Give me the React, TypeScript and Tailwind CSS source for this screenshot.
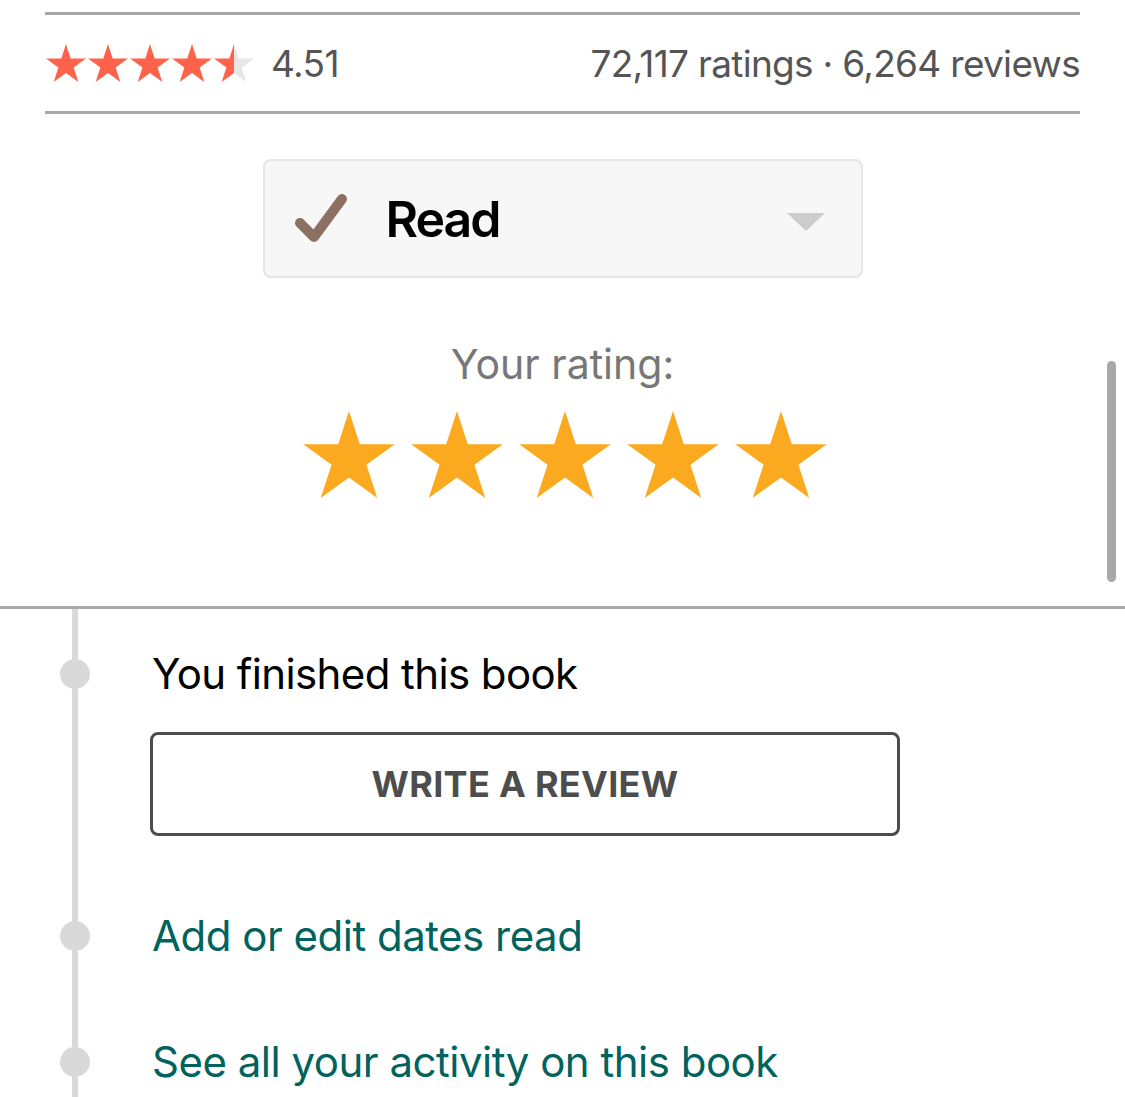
import React from "react";

const STAR_POINTS =
  "50,0 61.23,34.55 97.55,34.55 68.16,55.9 79.39,90.45 50,69.1 20.61,90.45 31.84,55.9 2.45,34.55 38.77,34.55";

function Star({ className, fill }: { className: string; fill: string }) {
  return (
    <svg viewBox="2.45 0 95.1 90.45" className={className}>
      <polygon points={STAR_POINTS} fill={fill} />
    </svg>
  );
}

function PartialStar({ className, pct }: { className: string; pct: number }) {
  return (
    <svg viewBox="2.45 0 95.1 90.45" className={className}>
      <defs>
        <linearGradient id="partial" x1="0" x2="1" y1="0" y2="0">
          <stop offset={`${pct}%`} stopColor="#ff624a" />
          <stop offset={`${pct}%`} stopColor="#e6e6e6" />
        </linearGradient>
      </defs>
      <polygon points={STAR_POINTS} fill="url(#partial)" />
    </svg>
  );
}

// grey node sitting on the timeline rail
function Dot() {
  return <div className="absolute -left-[92px] top-[15px] w-[30px] h-[30px] rounded-full bg-[#d9d9d9]" />;
}

export default function App() {
  const font = { fontFamily: "Inter, 'Noto Sans', sans-serif" };

  return (
    <div className="relative w-[1125px] h-[1097px] bg-white overflow-hidden" style={font}>
      {/* book rating summary */}
      <div className="px-[45px] pt-[12px]">
        <div className="flex items-center justify-between h-[102px] border-y-[3px] border-[#a8a8a8]">
          <div className="flex items-center">
            <div className="flex items-center gap-[2px] ml-[1px]">
              <Star className="w-[40px] h-[38px]" fill="#ff624a" />
              <Star className="w-[40px] h-[38px]" fill="#ff624a" />
              <Star className="w-[40px] h-[38px]" fill="#ff624a" />
              <Star className="w-[40px] h-[38px]" fill="#ff624a" />
              <PartialStar className="w-[40px] h-[38px]" pct={51} />
            </div>
            <span className="ml-[17px] text-[37px] tracking-[-0.6px] text-[#555555] leading-none">4.51</span>
          </div>
          <span className="text-[37px] tracking-[-0.7px] text-[#555555] leading-none">
            72,117 ratings · 6,264 reviews
          </span>
        </div>
      </div>

      {/* shelf dropdown */}
      <div className="flex justify-center mt-[45px]">
        <div className="flex items-center w-[600px] h-[119px] rounded-[8px] border-2 border-[#e6e6e6] bg-[#f7f7f7] pl-[30px] pr-[36px]">
          <svg viewBox="0 0 54 52" className="w-[54px] h-[52px]">
            <path
              d="M5 30 L19 44 L47 6"
              fill="none"
              stroke="#8c7163"
              strokeWidth="10"
              strokeLinecap="round"
              strokeLinejoin="round"
            />
          </svg>
          <span className="ml-[37px] text-[50px] font-semibold tracking-[-2px] text-black leading-none">Read</span>
          <div className="ml-auto mt-[6px] w-0 h-0 border-l-[19px] border-r-[19px] border-t-[18px] border-l-transparent border-r-transparent border-t-[#cccccc]" />
        </div>
      </div>

      {/* your rating */}
      <div className="flex flex-col items-center mt-[66px]">
        <span className="text-[41px] text-[#777777] leading-none">Your rating:</span>
        <div className="flex gap-[16px] mt-[26px] ml-[4px]">
          {[0, 1, 2, 3, 4].map((i) => (
            <Star key={i} className="w-[92px] h-[87px]" fill="#fba91e" />
          ))}
        </div>
      </div>

      {/* activity timeline */}
      <div className="absolute left-0 right-0 top-[606px] bottom-0 border-t-[3px] border-[#a8a8a8]">
        <div className="absolute left-[72px] top-0 bottom-0 w-[6px] bg-[#d9d9d9]" />
        <div className="relative pl-[152px]">
          <div className="relative flex items-center h-[60px] mt-[35px]">
            <Dot />
            <span className="text-[42px] tracking-[-0.6px] text-black leading-none">You finished this book</span>
          </div>
          <button className="mt-[28px] -ml-[2px] w-[750px] h-[104px] rounded-[8px] border-[3px] border-[#4d4d4d] text-[36px] font-bold tracking-[0.3px] text-[#4d4d4d]">
            WRITE A REVIEW
          </button>
          <div className="relative flex items-center h-[60px] mt-[70px]">
            <Dot />
            <span className="text-[42px] tracking-[-0.5px] text-[#00635d] leading-none">Add or edit dates read</span>
          </div>
          <div className="relative flex items-center h-[60px] mt-[66px]">
            <Dot />
            <span className="text-[42px] tracking-[-0.5px] text-[#00635d] leading-none">
              See all your activity on this book
            </span>
          </div>
        </div>
      </div>

      {/* scroll indicator */}
      <div className="absolute left-[1107px] top-[361px] w-[9px] h-[221px] rounded-full bg-[#a8a8a8]" />
    </div>
  );
}
